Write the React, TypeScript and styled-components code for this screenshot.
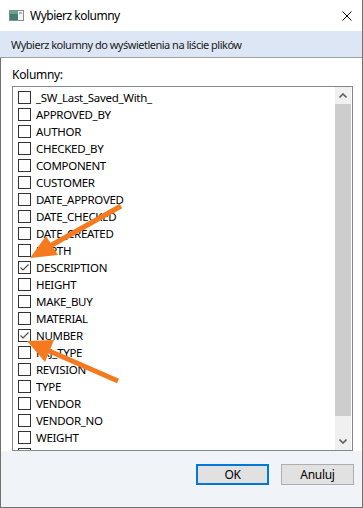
import React from 'react';
import styled, { createGlobalStyle } from 'styled-components';

const GlobalStyle = createGlobalStyle`
    html, body {
        margin: 0;
        padding: 0;
        background: #ffffff;
    }
    body {
        font-family: 'Noto Sans', 'DejaVu Sans', sans-serif;
        font-size: 12px;
        color: #000;
    }
    * {
        box-sizing: border-box;
    }
`;

type Column = {
    name: string;
    checked?: boolean;
};

const columns: Column[] = [
    { name: '_SW_Last_Saved_With_' },
    { name: 'APPROVED_BY' },
    { name: 'AUTHOR' },
    { name: 'CHECKED_BY' },
    { name: 'COMPONENT' },
    { name: 'CUSTOMER' },
    { name: 'DATE_APPROVED' },
    { name: 'DATE_CHECKED' },
    { name: 'DATE_CREATED' },
    { name: 'DEPTH' },
    { name: 'DESCRIPTION', checked: true },
    { name: 'HEIGHT' },
    { name: 'MAKE_BUY' },
    { name: 'MATERIAL' },
    { name: 'NUMBER', checked: true },
    { name: 'PRJ_TYPE' },
    { name: 'REVISION' },
    { name: 'TYPE' },
    { name: 'VENDOR' },
    { name: 'VENDOR_NO' },
    { name: 'WEIGHT' },
];

const Window = styled.div`
    position: relative;
    width: 363px;
    height: 508px;
    display: flex;
    flex-direction: column;
    background: #ffffff;
    border-right: 1px solid #707070;
    border-bottom: 1px solid #707070;
    overflow: hidden;
`;

const TitleBar = styled.div`
    height: 31px;
    flex: none;
    display: flex;
    align-items: center;
    padding: 0 10px 0 9px;
    gap: 6px;
`;

const Title = styled.span`
    flex: 1;
    font-size: 12px;
    line-height: 16px;
    letter-spacing: -0.5px;
    color: #000;
`;

const Band = styled.div`
    height: 27px;
    flex: none;
    display: flex;
    align-items: center;
    padding: 0 11px;
    background: #dce6f4;
    border-bottom: 1px solid #a0a0a0;
    font-size: 11px;
    letter-spacing: -0.5px;
    color: #1a1a1a;
`;

const Body = styled.div`
    flex: none;
    display: flex;
    flex-direction: column;
    padding: 9px 9px 0 11px;
    border-left: 1px solid #707070;
`;

const Label = styled.div`
    line-height: 16px;
    height: 16px;
    margin-bottom: 3px;
    letter-spacing: -0.3px;
`;

const ListBox = styled.div`
    height: 365px;
    display: flex;
    border: 1px solid #828790;
    background: #fff;
    overflow: hidden;
`;

const List = styled.div`
    flex: 1;
    padding: 2px 0 0 5px;
    overflow: hidden;
`;

const Row = styled.div`
    height: 17px;
    flex: none;
    display: flex;
    align-items: center;
    gap: 5px;
    white-space: nowrap;
    font-size: 11.5px;
    letter-spacing: -0.3px;
`;

const Box = styled.span`
    width: 13px;
    height: 13px;
    flex: none;
    display: flex;
    align-items: center;
    justify-content: center;
    border: 1px solid #333333;
    background: #fff;
`;

/* the next row below WEIGHT, scrolled out of view except for its box's top edge */
const PeekRow = styled.div`
    height: 17px;
    padding-top: 2px;
`;

const ScrollBar = styled.div`
    width: 16px;
    flex: none;
    margin: 0 1px 0 0;
    display: flex;
    flex-direction: column;
    background: #f0f0f0;
`;

const ScrollButton = styled.div`
    height: 17px;
    flex: none;
    display: flex;
    align-items: center;
    justify-content: center;
`;

const Thumb = styled.div`
    height: 312px;
    flex: none;
    background: #cdcdcd;
`;

const Track = styled.div`
    flex: 1;
`;

const Footer = styled.div`
    flex: 1;
    display: flex;
    justify-content: flex-end;
    align-items: flex-start;
    gap: 12px;
    padding: 13px 8px 0 0;
    background: #f0f4f9;
    border-left: 1px solid #707070;
`;

const Button = styled.button<{ primary?: boolean }>`
    width: 73px;
    height: 21px;
    padding: 0;
    font-family: 'Noto Sans', 'DejaVu Sans', sans-serif;
    font-size: 12px;
    letter-spacing: -0.3px;
    color: #000;
    background: #e1e1e1;
    border: ${({ primary }) => (primary ? '2px solid #0078d7' : '1px solid #adadad')};
`;

const Overlay = styled.svg`
    position: absolute;
    left: 0;
    top: 0;
    pointer-events: none;
`;

const AppIcon = () => (
    <svg width="15" height="11" viewBox="0 0 15 11">
        <rect x="0.5" y="0.5" width="14" height="10" fill="#f4f4f4" stroke="#8a8a8a" />
        <rect x="1" y="1" width="8" height="9" fill="#3f7f6e" />
        <rect x="1" y="1" width="8" height="3" fill="#6aa58f" />
        <rect x="10" y="2" width="3" height="2" fill="#9ab7d6" />
    </svg>
);

const CloseIcon = () => (
    <svg width="10" height="10" viewBox="0 0 10 10">
        <path d="M0.5 0.5 L9.5 9.5 M9.5 0.5 L0.5 9.5" stroke="#111" strokeWidth="1" />
    </svg>
);

const Check = () => (
    <svg width="11" height="11" viewBox="0 0 11 11">
        <path d="M1.5 5.5 L4 8 L9.5 2.5" fill="none" stroke="#505050" strokeWidth="1.2" />
    </svg>
);

const Chevron = ({ down }: { down?: boolean }) => (
    <svg width="8" height="5" viewBox="0 0 8 5">
        <path
            d={down ? 'M0.5 0.5 L4 4 L7.5 0.5' : 'M0.5 4.5 L4 1 L7.5 4.5'}
            fill="none"
            stroke="#606060"
            strokeWidth="1.6"
        />
    </svg>
);

const arrowColor = '#f57a1f';

const Arrows = () => (
    <Overlay width="363" height="508" viewBox="0 0 363 508">
        <line x1="121" y1="206" x2="50" y2="246" stroke={arrowColor} strokeWidth="5" />
        <polygon points="30,258 46,236 58,255" fill={arrowColor} />
        <line x1="118" y1="381" x2="47" y2="350" stroke={arrowColor} strokeWidth="5" />
        <polygon points="27,341 54,340 45,362" fill={arrowColor} />
    </Overlay>
);

const App: React.FC = () => {
    return (
        <>
            <GlobalStyle />
            <Window>
                <TitleBar>
                    <AppIcon />
                    <Title>Wybierz kolumny</Title>
                    <CloseIcon />
                </TitleBar>
                <Band>Wybierz kolumny do wyświetlenia na liście plików</Band>
                <Body>
                    <Label>Kolumny:</Label>
                    <ListBox>
                        <List>
                            {columns.map((c) => (
                                <Row key={c.name}>
                                    <Box>{c.checked && <Check />}</Box>
                                    <span>{c.name}</span>
                                </Row>
                            ))}
                            <PeekRow>
                                <Box />
                            </PeekRow>
                        </List>
                        <ScrollBar>
                            <ScrollButton>
                                <Chevron />
                            </ScrollButton>
                            <Thumb />
                            <Track />
                            <ScrollButton>
                                <Chevron down />
                            </ScrollButton>
                        </ScrollBar>
                    </ListBox>
                </Body>
                <Footer>
                    <Button primary>OK</Button>
                    <Button>Anuluj</Button>
                </Footer>
                <Arrows />
            </Window>
        </>
    );
};

export default App;
